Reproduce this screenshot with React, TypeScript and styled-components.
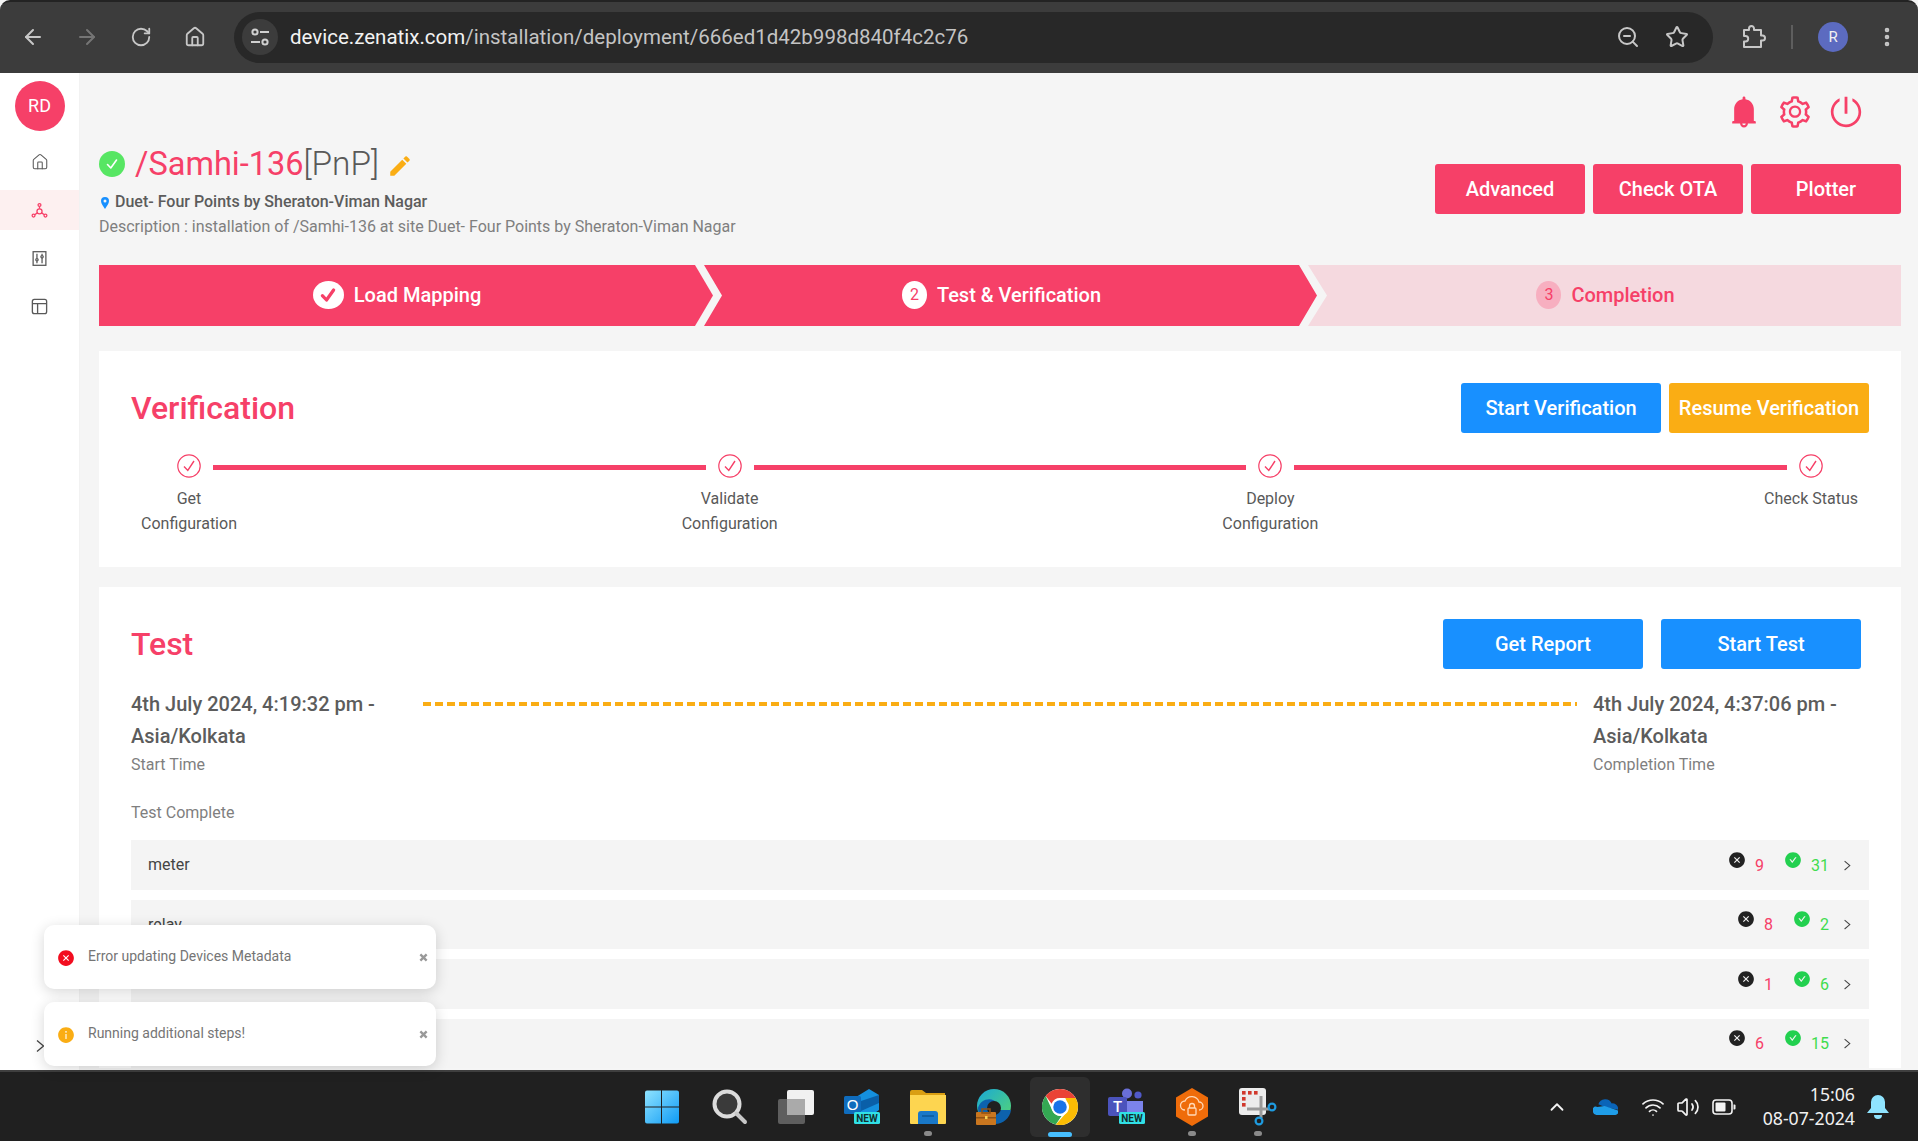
import React from "react";
import styled, { createGlobalStyle } from "styled-components";
import { ArrowLeft, ArrowRight, RotateCw, House, ZoomOut, Star, EllipsisVertical, ChevronUp, Wifi, Volume2 } from "lucide-react";
import { AiFillBell, AiOutlineSetting, AiOutlinePoweroff, AiFillCloseCircle, AiFillInfoCircle, AiFillCheckCircle } from "react-icons/ai";
import { MdEdit } from "react-icons/md";

const PINK = "#f64068";
const BLUE = "#1890ff";
const ORANGE = "#faad14";

const Global = createGlobalStyle`
  html, body { margin: 0; padding: 0; background: #f5f5f5; }
  * { box-sizing: border-box; }
  body { font-family: Roboto, "Liberation Sans", sans-serif; }
`;

const Root = styled.div`
  position: relative;
  width: 1918px;
  height: 1141px;
  overflow: hidden;
  display: flex;
  flex-direction: column;
`;

/* browser chrome */
const Chrome = styled.header`
  height: 73px;
  flex: none;
  background: #3c3c3c;
  border-top: 2px solid #232323;
  border-radius: 10px 10px 0 0;
  display: flex;
  align-items: center;
  padding: 0 0 1px 6px;
  color: #c7c7c7;
`;
const NavButton = styled.div<{ $dim?: boolean }>`
  width: 54px;
  display: flex;
  justify-content: center;
  color: ${(p) => (p.$dim ? "#757575" : "#c7c7c7")};
`;
const Address = styled.div`
  width: 1479px;
  height: 51px;
  margin-left: 12px;
  background: #282828;
  border-radius: 26px;
  display: flex;
  align-items: center;
  padding: 0 24px 0 8px;
`;
const SiteInfo = styled.div`
  width: 36px;
  height: 36px;
  border-radius: 50%;
  background: #3c3c3c;
  display: flex;
  align-items: center;
  justify-content: center;
`;
const Url = styled.div`
  margin-left: 12px;
  font-size: 20.5px;
  color: #c4c4c4;
  flex: 1;
  white-space: nowrap;
`;
const UrlHost = styled.span`
  color: #f2f2f2;
`;
const AddressIcon = styled.div<{ $ml: number }>`
  margin-left: ${(p) => p.$ml}px;
  display: flex;
`;
const ChromeTool = styled.div<{ $ml: number }>`
  margin-left: ${(p) => p.$ml}px;
  display: flex;
`;
const ChromeDivider = styled.div`
  width: 2px;
  height: 24px;
  margin-left: 24px;
  background: #5e5e5e;
`;
const ProfileBadge = styled.div`
  width: 30px;
  height: 30px;
  margin-left: 25px;
  border-radius: 50%;
  background: #5c6bc0;
  color: #f1f1f1;
  font-size: 15px;
  display: flex;
  align-items: center;
  justify-content: center;
`;

/* app */
const Body = styled.div`
  flex: 1;
  min-height: 0;
  display: flex;
  overflow: hidden;
`;
const Sidebar = styled.nav`
  width: 80px;
  flex: none;
  background: #fff;
  border-right: 1px solid #f2f2f2;
  padding: 8px 0 17px;
  display: flex;
  flex-direction: column;
  align-items: center;
`;
const Avatar = styled.div`
  width: 50px;
  height: 50px;
  border-radius: 50%;
  background: ${PINK};
  color: #fff;
  font-size: 18px;
  padding-bottom: 2px;
  display: flex;
  align-items: center;
  justify-content: center;
  margin-bottom: 11px;
`;
const NavItem = styled.div<{ $active?: boolean }>`
  width: 100%;
  height: 40px;
  margin-bottom: 8px;
  display: flex;
  align-items: center;
  justify-content: center;
  background: ${(p) => (p.$active ? "#fdf0f0" : "transparent")};
  color: ${(p) => (p.$active ? PINK : "#595959")};
`;
const SidebarToggle = styled.div`
  margin-top: auto;
  color: #444;
  display: flex;
`;
const Main = styled.main`
  flex: 1;
  min-width: 0;
  padding: 0 17px 0 19px;
  background: #f5f5f5;
`;
const TopIcons = styled.div`
  height: 71px;
  padding: 21px 37px 0 0;
  display: flex;
  justify-content: flex-end;
  gap: 15px;
  align-items: flex-start;
`;
const TopIcon = styled.div`
  width: 36px;
  height: 36px;
  display: flex;
  align-items: center;
  justify-content: center;
  color: ${PINK};
`;
const Header = styled.div`
  display: flex;
  justify-content: space-between;
  height: 95px;
  margin-bottom: 26px;
`;
const TitleLine = styled.div`
  height: 40px;
  display: flex;
  align-items: center;
`;
const StatusDot = styled.div`
  width: 26px;
  height: 26px;
  border-radius: 50%;
  background: #57e663;
  display: flex;
  align-items: center;
  justify-content: center;
  margin-right: 10px;
`;
const Title = styled.h1`
  margin: 0;
  font-size: 32.5px;
  font-weight: 400;
  color: ${PINK};
  line-height: 40px;
`;
const TitleTag = styled.span`
  color: #595959;
  font-weight: 300;
  font-size: 33.4px;
`;
const EditIcon = styled.span`
  margin: 4px 0 0 8px;
  color: ${ORANGE};
  display: flex;
`;
const Location = styled.div`
  height: 25px;
  margin-top: 5px;
  font-size: 16px;
  font-weight: 500;
  line-height: 25px;
  color: #5c5c5c;
  display: flex;
  align-items: center;
  gap: 6px;
  padding-left: 2px;
`;
const PinIcon = styled.span`
  display: flex;
  margin-top: 2px;
`;
const Description = styled.div`
  height: 25px;
  font-size: 16px;
  line-height: 25px;
  color: #7f7f7f;
`;
const ButtonRow = styled.div<{ $top?: number; $right?: number }>`
  display: flex;
  gap: 8px;
  margin-top: ${(p) => p.$top ?? 0}px;
  margin-right: ${(p) => p.$right ?? 0}px;
`;
const Button = styled.button<{ $bg: string; $w: number; $ml?: number }>`
  width: ${(p) => p.$w}px;
  height: 50px;
  margin-left: ${(p) => p.$ml ?? 0}px;
  border: 0;
  border-radius: 3px;
  background: ${(p) => p.$bg};
  color: #fff;
  font: 500 20px Roboto, sans-serif;
  padding: 0;
  white-space: nowrap;
`;

const StepBar = styled.div`
  display: flex;
  height: 61px;
  margin-bottom: 25px;
`;
const StepShape = styled.div<{ $kind: "first" | "mid" | "last" }>`
  height: 61px;
  display: flex;
  align-items: center;
  justify-content: center;
  gap: 10px;
  padding-bottom: 2px;
  font-size: 20px;
  font-weight: 500;
  color: ${(p) => (p.$kind === "last" ? PINK : "#fff")};
  background: ${(p) => (p.$kind === "last" ? "#f5d9df" : PINK)};
  ${(p) =>
    p.$kind === "first" &&
    `width: 614px; padding-right: 18px; clip-path: polygon(0 0, calc(100% - 18px) 0, 100% 50%, calc(100% - 18px) 100%, 0 100%);`}
  ${(p) =>
    p.$kind === "mid" &&
    `width: 613px; margin-left: -9px; padding-right: 18px; clip-path: polygon(0 0, calc(100% - 18px) 0, 100% 50%, calc(100% - 18px) 100%, 0 100%, 18px 50%);`}
  ${(p) =>
    p.$kind === "last" &&
    `flex: 1; margin-left: -9px; padding-left: 2px; clip-path: polygon(0 0, 100% 0, 100% 100%, 0 100%, 19px 50%);`}
`;
const StepBadge = styled.span<{ $muted?: boolean; $wide?: boolean }>`
  width: ${(p) => (p.$wide ? 31 : 25)}px;
  height: 28px;
  border-radius: 50%;
  background: ${(p) => (p.$muted ? "#f7afc0" : "#fff")};
  color: ${PINK};
  font-size: 16px;
  font-weight: 400;
  display: flex;
  align-items: center;
  justify-content: center;
`;

const Card = styled.section<{ $h?: number; $mb?: number }>`
  background: #fff;
  padding: 32px 32px 0;
  ${(p) => (p.$h ? `height: ${p.$h}px;` : "")}
  margin-bottom: ${(p) => p.$mb ?? 0}px;
`;
const CardHead = styled.div`
  display: flex;
  justify-content: space-between;
  align-items: center;
  height: 50px;
`;
const CardTitle = styled.h2`
  margin: 0;
  font-size: 32px;
  font-weight: 500;
  color: ${PINK};
`;
const Stepper = styled.div`
  display: flex;
  padding: 0 34px;
  margin-top: 21px;
`;
const StepItem = styled.div`
  width: 48px;
  flex: none;
  display: flex;
  flex-direction: column;
  align-items: center;
`;
const StepLabel = styled.div`
  width: 116px;
  flex: none;
  margin-top: 8px;
  font-size: 16px;
  line-height: 25px;
  text-align: center;
  color: #595959;
`;
const StepLine = styled.div`
  flex: 1;
  height: 5px;
  margin-top: 11px;
  background: ${PINK};
`;

const Timeline = styled.div`
  display: flex;
  margin-top: 19px;
`;
const TimeBlock = styled.div<{ $w: number }>`
  width: ${(p) => p.$w}px;
  flex: none;
`;
const TimeValue = styled.div`
  font-size: 20px;
  font-weight: 500;
  line-height: 32px;
  color: #5c5c5c;
`;
const TimeLabel = styled.div`
  font-size: 16px;
  line-height: 24px;
  margin-top: 1px;
  color: #7f7f7f;
`;
const Dashes = styled.div`
  flex: 1;
  height: 4px;
  margin: 14px 16px 0 0;
  background: repeating-linear-gradient(90deg, ${ORANGE} 0 8px, transparent 8px 12px);
`;
const CompleteLabel = styled(TimeLabel)`
  margin: 24px 0 15px;
`;
const Rows = styled.div`
  display: flex;
  flex-direction: column;
  gap: 10px;
`;
const Row = styled.div`
  height: 49.5px;
  flex: none;
  background: #f4f4f4;
  padding: 0 18px 0 17px;
  display: flex;
  align-items: center;
  font-size: 16px;
  color: #444;
`;
const RowName = styled.span`
  flex: 1;
`;
const CountIcon = styled.span<{ $color: string; $ml?: number }>`
  display: flex;
  color: ${(p) => p.$color};
  margin: 0 9px 10px ${(p) => p.$ml ?? 0}px;
`;
const Count = styled.span<{ $color: string; $w: number }>`
  color: ${(p) => p.$color};
  width: ${(p) => p.$w}px;
  margin-top: 1px;
`;
const RowChevron = styled.span`
  display: flex;
  color: #444;
  margin-left: 14px;
  margin-top: 1px;
`;

/* toasts */
const Toasts = styled.div`
  position: absolute;
  left: 44px;
  top: 925px;
  width: 392px;
  display: flex;
  flex-direction: column;
  gap: 13px;
`;
const Toast = styled.div`
  height: 64px;
  background: #fff;
  border-radius: 10px;
  box-shadow: 0 3px 14px rgba(0, 0, 0, 0.16);
  display: flex;
  align-items: center;
  padding: 0 8px 0 13px;
  font-size: 14px;
  color: #757575;
`;
const ToastIcon = styled.span<{ $color: string }>`
  display: flex;
  color: ${(p) => p.$color};
  margin: 2px 13px 0 0;
`;
const ToastText = styled.span`
  flex: 1;
  margin-top: -3px;
`;
const ToastClose = styled.span`
  color: #999;
  display: flex;
`;

/* taskbar */
const Taskbar = styled.footer`
  height: 71px;
  flex: none;
  background: #202020;
  border-top: 2px solid #3f3f3f;
  padding-left: 629px;
  display: flex;
  align-items: center;
`;
const Slot = styled.div<{ $active?: boolean }>`
  position: relative;
  width: 66px;
  height: 60px;
  display: flex;
  align-items: center;
  justify-content: center;
  &:first-child {
    width: 68px;
    padding-right: 2px;
  }
  &::before {
    content: "";
    position: absolute;
    inset: 0 3px;
    border-radius: 6px;
    background: ${(p) => (p.$active ? "#2e2e2e" : "transparent")};
  }
  & > svg {
    position: relative;
  }
`;
const Running = styled.span<{ $active?: boolean }>`
  position: absolute;
  left: 50%;
  bottom: ${(p) => (p.$active ? 0 : 1)}px;
  width: ${(p) => (p.$active ? 24 : 8)}px;
  height: 5px;
  margin-left: ${(p) => (p.$active ? -12 : -4)}px;
  border-radius: 3px;
  background: ${(p) => (p.$active ? "#47bfff" : "#8a8a8a")};
`;
const Tray = styled.div`
  margin-left: auto;
  padding-right: 28px;
  display: flex;
  align-items: center;
  color: #f3f3f3;
`;
const TrayIcon = styled.span<{ $ml: number }>`
  margin-left: ${(p) => p.$ml}px;
  display: flex;
`;
const Clock = styled.div`
  margin: -2px 0 0 25px;
  width: 94px;
  font: 400 17.7px/24px "Noto Sans", sans-serif;
  text-align: right;
  white-space: nowrap;
  color: #f1f1f1;
`;

/* drawings */
const SiteTune = () => (
  <svg width="22" height="22" viewBox="0 0 22 22" fill="none" stroke="#d0d0d0" strokeWidth="2">
    <circle cx="6" cy="6" r="2.6" />
    <path d="M11 6h9" />
    <circle cx="16" cy="16" r="2.6" />
    <path d="M2 16h9" />
  </svg>
);
const ExtensionIcon = () => (
  <svg width="26" height="26" viewBox="0 0 26 26" fill="none" stroke="#c7c7c7" strokeWidth="2" strokeLinejoin="round">
    <path d="M3 6h5V4.5a2.5 2.5 0 0 1 5 0V6h7v5.5h1.5a2.5 2.5 0 0 1 0 5H20V23H3v-5.5h1.5a2.7 2.7 0 0 0 0-5.4H3z" />
  </svg>
);
const MapPin = () => (
  <svg width="8" height="12" viewBox="0 0 8 12">
    <path d="M4 0a4 4 0 0 1 4 4c0 2.6-2.4 5.6-4 8C2.4 9.6 0 6.6 0 4a4 4 0 0 1 4-4z" fill={BLUE} />
    <circle cx="4" cy="4" r="1.5" fill="#f5f5f5" />
  </svg>
);
const CheckMark = ({ size, color, w = 2 }: { size: number; color: string; w?: number }) => (
  <svg width={size} height={size} viewBox="0 0 16 16" fill="none" stroke={color} strokeWidth={w} strokeLinecap="round" strokeLinejoin="round">
    <path d="M3.5 8.5 6.8 12 12.5 4" />
  </svg>
);
const CircleCheck = () => (
  <svg width="24" height="24" viewBox="0 0 24 24" fill="none" stroke={PINK} strokeWidth="1.2">
    <circle cx="12" cy="12" r="11.2" />
    <path d="M7 12.5 10.8 16.5 17 7" strokeWidth="1.4" />
  </svg>
);
const NetworkIcon = () => (
  <svg width="17" height="17" viewBox="0 0 20 20" fill="none" stroke="currentColor" strokeWidth="1.5">
    <circle cx="10" cy="11" r="3" />
    <circle cx="10" cy="3.5" r="1.7" />
    <circle cx="3" cy="16" r="1.7" />
    <circle cx="17" cy="16" r="1.7" />
    <path d="M10 5.2V8M7.5 12.8l-3.2 2.2M12.5 12.8l3.2 2.2" />
  </svg>
);
const TuneIcon = () => (
  <svg width="17" height="17" viewBox="0 0 20 20" fill="none" stroke="currentColor" strokeWidth="1.5">
    <rect x="2.5" y="2" width="15" height="16" />
    <path d="M7 4.5v11M13 4.5v11" />
    <circle cx="7" cy="11.5" r="1.4" fill="#fff" />
    <circle cx="13" cy="8" r="1.4" fill="#fff" />
  </svg>
);
const LayoutIcon = () => (
  <svg width="19" height="19" viewBox="0 0 20 20" fill="none" stroke="currentColor" strokeWidth="1.4">
    <rect x="2.5" y="2.5" width="15" height="15" rx="2" />
    <path d="M2.5 7h15M8 7v10.5" />
  </svg>
);
const SmallChevron = ({ size }: { size: number }) => (
  <svg width={size} height={size * 1.4} viewBox="0 0 10 14" fill="none" stroke="currentColor" strokeWidth="1.3">
    <path d="M2 1.5 8.5 7 2 12.5" />
  </svg>
);
const SmallX = ({ size }: { size: number }) => (
  <svg width={size} height={size} viewBox="0 0 10 10" stroke="currentColor" strokeWidth="2.6">
    <path d="M1.5 1.5 8.5 8.5M8.5 1.5 1.5 8.5" />
  </svg>
);

const WindowsLogo = () => (
  <svg width="36" height="36" viewBox="0 0 36 36">
    <defs>
      <linearGradient id="win" x1="0" y1="0" x2="1" y2="1">
        <stop offset="0" stopColor="#8fe3ff" />
        <stop offset="1" stopColor="#0f9bf5" />
      </linearGradient>
    </defs>
    <path fill="url(#win)" d="M1 3.5A2 2 0 0 1 3 1.5h14v16H1zM18 1.5h15a2 2 0 0 1 2 2v14H18zM1 18.5h16v16H3a2 2 0 0 1-2-2zM18 18.5h17v14a2 2 0 0 1-2 2H18z" />
  </svg>
);
const SearchGlyph = () => (
  <svg width="36" height="36" viewBox="0 0 36 36" fill="none">
    <circle cx="15" cy="15" r="12.5" fill="#3a3a3a" stroke="#dcdcdc" strokeWidth="4" />
    <path d="M24.5 24.5 33 33" stroke="#c8c8c8" strokeWidth="4" strokeLinecap="round" />
  </svg>
);
const TaskView = () => (
  <svg width="38" height="36" viewBox="0 0 38 36">
    <rect x="1" y="10" width="27" height="25" rx="2" fill="#5e5e5e" />
    <rect x="10" y="1" width="27" height="25" rx="2" fill="#f1f1f1" />
    <rect x="10" y="10" width="18" height="16" fill="#aaa" />
  </svg>
);
const NewBadge = ({ x = 12 }: { x?: number }) => (
  <g>
    <rect x={x} y="24" width="26" height="12" rx="1.5" fill="#31e0e6" />
    <text x={x + 13} y="33.5" fontFamily="Roboto, sans-serif" fontSize="10" fontWeight="700" textAnchor="middle" fill="#103030">NEW</text>
  </g>
);
const OutlookLogo = () => (
  <svg width="38" height="38" viewBox="0 0 38 38">
    <path d="M13 9 26 1l10 6v15L22 32l-9-4z" fill="#1490df" />
    <path d="M18 13 36 7v8l-18 8z" fill="#0a5fa8" />
    <rect x="1" y="8" width="17" height="18" rx="1.5" fill="#0f6cbd" />
    <text x="9.5" y="22" fontFamily="Liberation Sans, sans-serif" fontSize="15" textAnchor="middle" fill="#fff">O</text>
    <NewBadge x={11} />
  </svg>
);
const FolderLogo = () => (
  <svg width="38" height="36" viewBox="0 0 38 36">
    <path d="M1 3a2 2 0 0 1 2-2h10l4 3h19v6H1z" fill="#d99e12" />
    <path d="M1 6h36v28a1 1 0 0 1-1 1H2a1 1 0 0 1-1-1z" fill="#fdd550" />
    <path d="M9 25a3 3 0 0 1 3-3h14a3 3 0 0 1 3 3v10H9z" fill="#1978c8" />
    <path d="M13 27h12" stroke="#0d5a9c" strokeWidth="1.6" />
  </svg>
);
const EdgeLogo = () => (
  <svg width="38" height="38" viewBox="0 0 38 38">
    <defs>
      <linearGradient id="edgeA" x1="0" y1="0" x2="1" y2="1">
        <stop offset="0" stopColor="#19a8d8" />
        <stop offset="1" stopColor="#58d86e" />
      </linearGradient>
    </defs>
    <circle cx="19" cy="18" r="17" fill="url(#edgeA)" />
    <path d="M3 20c2-9 14-12 19-5 3 4 0 7-3 7h17c-1 8-8 14-16 14C12 36 3 30 3 20z" fill="#0d62ad" />
    <circle cx="19" cy="20" r="7" fill="#202020" />
    <rect x="1" y="24" width="20" height="13" rx="1" fill="#c9761f" />
    <rect x="7" y="21" width="8" height="4" fill="none" stroke="#8f5214" strokeWidth="1.5" />
    <rect x="1" y="29" width="20" height="1.5" fill="#8f5214" />
    <rect x="10" y="28" width="2.5" height="3" fill="#f6cf55" />
  </svg>
);
const ChromeLogo = () => (
  <svg width="36" height="36" viewBox="0 0 48 48">
    <circle cx="24" cy="24" r="24" fill="#fff" />
    <path fill="#ea4335" d="M24 0a24 24 0 0 1 20.8 12H24a12 12 0 0 0-11.2 7.6L4.9 9.4A24 24 0 0 1 24 0z" />
    <path fill="#34a853" d="M4.9 9.4 14.4 30A12 12 0 0 0 26 35.9L18.5 47.4A24 24 0 0 1 4.9 9.4z" />
    <path fill="#fbbc04" d="M44.8 12A24 24 0 0 1 18.5 47.4L29.8 34.5A12 12 0 0 0 33 16.2L31 12z" />
    <circle cx="24" cy="24" r="11.5" fill="#fff" />
    <circle cx="24" cy="24" r="9" fill="#1a73e8" />
  </svg>
);
const TeamsLogo = () => (
  <svg width="38" height="38" viewBox="0 0 38 38">
    <circle cx="20" cy="5.5" r="5" fill="#6a6fd8" />
    <circle cx="31" cy="7" r="3.6" fill="#5059c9" />
    <path d="M15 13h21v12a7 7 0 0 1-7 7h-7a7 7 0 0 1-7-7z" fill="#7b83eb" />
    <rect x="1" y="9" width="19" height="19" rx="2" fill="#4b53bc" />
    <text x="10.5" y="24" fontFamily="Roboto, sans-serif" fontSize="15" fontWeight="500" textAnchor="middle" fill="#fff">T</text>
    <NewBadge x={12} />
  </svg>
);
const VpnLogo = () => (
  <svg width="34" height="38" viewBox="0 0 34 38">
    <path d="M17 0 33 9.5v19L17 38 1 28.5v-19z" fill="#ef6c0a" />
    <path d="M10 22a4.5 4.5 0 0 1 0-9 7.5 7.5 0 0 1 14 1 4 4 0 0 1 0 8" fill="none" stroke="#ffd9b8" strokeWidth="1.3" />
    <rect x="13" y="20" width="8" height="7" rx="1" fill="none" stroke="#ffd9b8" strokeWidth="1.3" />
    <path d="M14.5 20v-2a2.5 2.5 0 0 1 5 0v2" fill="none" stroke="#ffd9b8" strokeWidth="1.3" />
  </svg>
);
const SnipLogo = () => (
  <svg width="38" height="38" viewBox="0 0 38 38">
    <rect x="0" y="0" width="27" height="27" rx="3" fill="#ececec" />
    <rect x="3" y="3" width="3.6" height="3.6" fill="#d1382c" />
    <rect x="9" y="3" width="3.6" height="3.6" fill="#d1382c" />
    <rect x="15" y="3" width="3.6" height="3.6" fill="#d1382c" />
    <rect x="3" y="9" width="3.6" height="3.6" fill="#d1382c" />
    <rect x="3" y="15" width="3.6" height="3.6" fill="#d1382c" />
    <path d="M8 21 H30 M22 8 V30" stroke="#9a9a9a" strokeWidth="3" />
    <circle cx="33" cy="19" r="3.4" fill="none" stroke="#1e9be0" strokeWidth="2.2" />
    <circle cx="20" cy="33" r="3.4" fill="none" stroke="#1e9be0" strokeWidth="2.2" />
  </svg>
);
const OneDrive = () => (
  <svg width="25" height="18" viewBox="0 0 28 20">
    <path d="M6 7a8 8 0 0 1 15-1 6 6 0 0 1 7 7L13 10z" fill="#0a64b8" />
    <path d="M0 16a4 4 0 0 1 5-6l8-1 15 5a3.5 3.5 0 0 1-3 5H4a4 4 0 0 1-4-3z" fill="#1f9de8" />
  </svg>
);
const BatteryIcon = () => (
  <svg width="24" height="18" viewBox="0 0 24 18" fill="none">
    <rect x="1" y="2" width="19" height="14" rx="3" stroke="#f3f3f3" strokeWidth="1.6" />
    <rect x="3.5" y="4.5" width="10" height="9" rx="1" fill="#f3f3f3" />
    <path d="M21.5 6.5h1a1 1 0 0 1 1 1v3a1 1 0 0 1-1 1h-1z" fill="#f3f3f3" />
  </svg>
);
const TrayBell = () => (
  <svg width="24" height="26" viewBox="0 0 24 26">
    <path d="M12 1a7 7 0 0 1 7 7v6l4 5H1l4-5V8a7 7 0 0 1 7-7z" fill="#8fe4ff" />
    <path d="M8 21h8a4 4 0 0 1-8 0z" fill="#8fe4ff" />
  </svg>
);

const steps = [
  { label: "Get Configuration" },
  { label: "Validate Configuration" },
  { label: "Deploy Configuration" },
  { label: "Check Status" },
];
const rows = [
  { name: "meter", bad: 9, good: 31 },
  { name: "relay", bad: 8, good: 2 },
  { name: "", bad: 1, good: 6 },
  { name: "", bad: 6, good: 15 },
];
const apps: { node: React.ReactNode; running?: boolean; active?: boolean }[] = [
  { node: <WindowsLogo /> },
  { node: <SearchGlyph /> },
  { node: <TaskView /> },
  { node: <OutlookLogo /> },
  { node: <FolderLogo />, running: true },
  { node: <EdgeLogo /> },
  { node: <ChromeLogo />, active: true },
  { node: <TeamsLogo /> },
  { node: <VpnLogo />, running: true },
  { node: <SnipLogo />, running: true },
];

export default function App() {
  return (
    <Root>
      <Global />
      <Chrome>
        <NavButton><ArrowLeft size={24} strokeWidth={2} /></NavButton>
        <NavButton $dim><ArrowRight size={24} strokeWidth={2} /></NavButton>
        <NavButton><RotateCw size={22} strokeWidth={2} /></NavButton>
        <NavButton><House size={22} strokeWidth={2} /></NavButton>
        <Address>
          <SiteInfo><SiteTune /></SiteInfo>
          <Url><UrlHost>device.zenatix.com</UrlHost>/installation/deployment/666ed1d42b998d840f4c2c76</Url>
          <AddressIcon $ml={0}><ZoomOut size={24} strokeWidth={2} /></AddressIcon>
          <AddressIcon $ml={25}><Star size={24} strokeWidth={2} /></AddressIcon>
        </Address>
        <ChromeTool $ml={28}><ExtensionIcon /></ChromeTool>
        <ChromeDivider />
        <ProfileBadge>R</ProfileBadge>
        <ChromeTool $ml={27}><EllipsisVertical size={24} strokeWidth={2.6} /></ChromeTool>
      </Chrome>
      <Body>
        <Sidebar>
          <Avatar>RD</Avatar>
          <NavItem><House size={18} strokeWidth={1.4} /></NavItem>
          <NavItem $active><NetworkIcon /></NavItem>
          <NavItem><TuneIcon /></NavItem>
          <NavItem><LayoutIcon /></NavItem>
          <SidebarToggle><SmallChevron size={10} /></SidebarToggle>
        </Sidebar>
        <Main>
          <TopIcons>
            <TopIcon><AiFillBell size={36} /></TopIcon>
            <TopIcon><AiOutlineSetting size={36} /></TopIcon>
            <TopIcon><AiOutlinePoweroff size={36} /></TopIcon>
          </TopIcons>
          <Header>
            <div>
              <TitleLine>
                <StatusDot><CheckMark size={16} color="#fff" w={1.6} /></StatusDot>
                <Title>/Samhi-136<TitleTag>[PnP]</TitleTag></Title>
                <EditIcon><MdEdit size={26} /></EditIcon>
              </TitleLine>
              <Location>
                <PinIcon><MapPin /></PinIcon>
                Duet- Four Points by Sheraton-Viman Nagar
              </Location>
              <Description>Description : installation of /Samhi-136 at site Duet- Four Points by Sheraton-Viman Nagar</Description>
            </div>
            <ButtonRow $top={20}>
              <Button $bg={PINK} $w={150}>Advanced</Button>
              <Button $bg={PINK} $w={150}>Check OTA</Button>
              <Button $bg={PINK} $w={150}>Plotter</Button>
            </ButtonRow>
          </Header>
          <StepBar>
            <StepShape $kind="first">
              <StepBadge $wide><CheckMark size={20} color={PINK} w={2.6} /></StepBadge>
              Load Mapping
            </StepShape>
            <StepShape $kind="mid">
              <StepBadge>2</StepBadge>
              Test &amp; Verification
            </StepShape>
            <StepShape $kind="last">
              <StepBadge $muted>3</StepBadge>
              Completion
            </StepShape>
          </StepBar>
          <Card $h={216} $mb={20}>
            <CardHead>
              <CardTitle>Verification</CardTitle>
              <ButtonRow>
                <Button $bg={BLUE} $w={200}>Start Verification</Button>
                <Button $bg={ORANGE} $w={200}>Resume Verification</Button>
              </ButtonRow>
            </CardHead>
            <Stepper>
              {steps.map((s, i) => (
                <React.Fragment key={s.label}>
                  {i > 0 && <StepLine />}
                  <StepItem>
                    <CircleCheck />
                    <StepLabel>{s.label}</StepLabel>
                  </StepItem>
                </React.Fragment>
              ))}
            </Stepper>
          </Card>
          <Card>
            <CardHead>
              <CardTitle>Test</CardTitle>
              <ButtonRow $right={8}>
                <Button $bg={BLUE} $w={200}>Get Report</Button>
                <Button $bg={BLUE} $w={200} $ml={10}>Start Test</Button>
              </ButtonRow>
            </CardHead>
            <Timeline>
              <TimeBlock $w={292}>
                <TimeValue>4th July 2024, 4:19:32 pm - Asia/Kolkata</TimeValue>
                <TimeLabel>Start Time</TimeLabel>
              </TimeBlock>
              <Dashes />
              <TimeBlock $w={276}>
                <TimeValue>4th July 2024, 4:37:06 pm - Asia/Kolkata</TimeValue>
                <TimeLabel>Completion Time</TimeLabel>
              </TimeBlock>
            </Timeline>
            <CompleteLabel>Test Complete</CompleteLabel>
            <Rows>
              {rows.map((r, i) => (
                <Row key={i}>
                  <RowName>{r.name}</RowName>
                  <CountIcon $color="#222"><AiFillCloseCircle size={18} /></CountIcon>
                  <Count $color={PINK} $w={9}>{r.bad}</Count>
                  <CountIcon $color="#22d04f" $ml={20}><AiFillCheckCircle size={18} /></CountIcon>
                  <Count $color="#3fdc4e" $w={String(r.good).length * 9}>{r.good}</Count>
                  <RowChevron><SmallChevron size={8} /></RowChevron>
                </Row>
              ))}
            </Rows>
          </Card>
        </Main>
      </Body>
      <Toasts>
        <Toast>
          <ToastIcon $color="#f20d1f"><AiFillCloseCircle size={18} /></ToastIcon>
          <ToastText>Error updating Devices Metadata</ToastText>
          <ToastClose><SmallX size={9} /></ToastClose>
        </Toast>
        <Toast>
          <ToastIcon $color={ORANGE}><AiFillInfoCircle size={18} /></ToastIcon>
          <ToastText>Running additional steps!</ToastText>
          <ToastClose><SmallX size={9} /></ToastClose>
        </Toast>
      </Toasts>
      <Taskbar>
        {apps.map((a, i) => (
          <Slot key={i} $active={a.active}>
            {a.node}
            {a.running && <Running />}
            {a.active && <Running $active />}
          </Slot>
        ))}
        <Tray>
          <TrayIcon $ml={0}><ChevronUp size={22} /></TrayIcon>
          <TrayIcon $ml={25}><OneDrive /></TrayIcon>
          <TrayIcon $ml={23}><Wifi size={24} strokeWidth={1.7} /></TrayIcon>
          <TrayIcon $ml={11}><Volume2 size={24} strokeWidth={1.7} /></TrayIcon>
          <TrayIcon $ml={12}><BatteryIcon /></TrayIcon>
          <Clock>15:06<br />08-07-2024</Clock>
          <TrayIcon $ml={11}><TrayBell /></TrayIcon>
        </Tray>
      </Taskbar>
    </Root>
  );
}
